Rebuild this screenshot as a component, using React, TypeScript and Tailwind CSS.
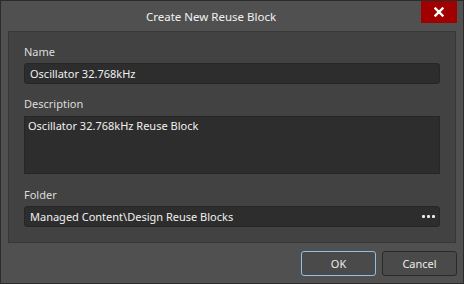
import React from "react";

export default function App() {
  const font = { fontFamily: '"Noto Sans", "Open Sans", sans-serif' };
  return (
    <div
      className="w-[464px] h-[284px] bg-[#505050] border border-[#2b2b2b] flex flex-col text-[11px] leading-[16px] text-[#e6e6e6] overflow-hidden"
      style={font}
    >
      <div className="h-[30px] flex items-start">
        <div className="flex-1 text-center pt-[8px] text-[11.5px] text-[#f2f2f2]">Create New Reuse Block</div>
        <div className="mr-[6px] w-[36px] h-[22px] bg-[#a00000] flex items-center justify-center">
          <svg width="10" height="10" viewBox="0 0 10 10">
            <path d="M1.5 1.5 L8.5 8.5 M8.5 1.5 L1.5 8.5" stroke="#ffffff" strokeWidth="2.4" strokeLinecap="square" />
          </svg>
        </div>
      </div>

      <div className="mx-[7px] bg-[#424242] border border-[#373737] px-[15px] pt-[12px] pb-[15px] flex flex-col">
        <div className="text-[#dcdcdc]">Name</div>
        <div className="mt-[3px] h-[21px] rounded-[3px] bg-[#2d2d2d] border border-[#262626] flex items-center pl-[5px] text-[#f0f0f0]">
          Oscillator 32.768kHz
        </div>

        <div className="mt-[12px] text-[#dcdcdc]">Description</div>
        <div className="mt-[4px] h-[58px] bg-[#2d2d2d] border border-[#262626] pl-[3px] pt-[1px] text-[#f0f0f0]">
          Oscillator 32.768kHz Reuse Block
        </div>

        <div className="mt-[13px] text-[#dcdcdc]">Folder</div>
        <div className="mt-[3px] h-[21px] rounded-[3px] bg-[#2d2d2d] border border-[#262626] flex items-center pl-[5px] pr-[4px] text-[#f0f0f0]">
          <span className="flex-1">Managed Content\Design Reuse Blocks</span>
          <span className="flex gap-[2px]">
            <span className="w-[3px] h-[3px] rounded-[1px] bg-[#e8e8e8]" />
            <span className="w-[3px] h-[3px] rounded-[1px] bg-[#e8e8e8]" />
            <span className="w-[3px] h-[3px] rounded-[1px] bg-[#e8e8e8]" />
          </span>
        </div>
      </div>

      <div className="mt-[8px] flex justify-end gap-[6px] pr-[6px]">
        <div className="w-[75px] h-[25px] rounded-[3px] border border-[#8fbfea] bg-[#4a4a4a] flex items-center justify-center text-[#ececec]">
          OK
        </div>
        <div className="w-[75px] h-[25px] rounded-[3px] border border-[#2a2a2a] bg-[#4a4a4a] flex items-center justify-center text-[#ececec]">
          Cancel
        </div>
      </div>
    </div>
  );
}
